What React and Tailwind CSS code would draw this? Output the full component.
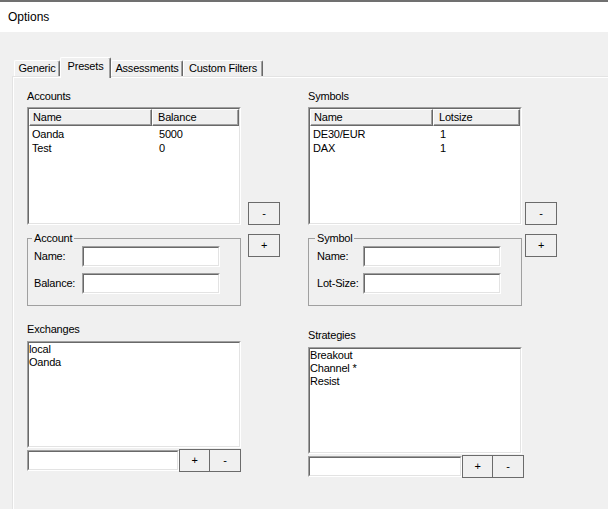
import React from "react";

function Sunken({ className = "", innerClass = "", children }) {
  return (
    <div className={`border border-t-[#a0a0a0] border-l-[#a0a0a0] border-r-white border-b-white ${className}`}>
      <div className={`h-full border border-t-[#696969] border-l-[#696969] border-r-[#e3e3e3] border-b-[#e3e3e3] bg-white ${innerClass}`}>
        {children}
      </div>
    </div>
  );
}

function Btn({ label, className = "" }) {
  return (
    <button
      type="button"
      className={`flex items-center justify-center border border-[#6b6b6b] bg-[#f0f0f0] text-[11px] leading-[13px] text-black ${className}`}
    >
      {label}
    </button>
  );
}

function ListView({ cols, rows }) {
  return (
    <Sunken className="h-[118px] w-[214px]">
      <div className="flex h-[17px]">
        {cols.map((c, i) => (
          <div
            key={c.name}
            className={`flex items-center border-t border-l border-r border-b border-t-white border-l-white border-r-[#696969] border-b-[#696969] bg-[#f0f0f0] shadow-[inset_-1px_-1px_0_#a0a0a0] ${
              i === 0 ? "w-[123px] pl-[3px]" : "w-[87px] pl-[5px]"
            }`}
          >
            {c.name}
          </div>
        ))}
      </div>
      <div className="pt-[1px]">
        {rows.map((r) => (
          <div key={r[0]} className="flex h-[14px] items-center leading-[14px]">
            <div className="w-[123px] pl-[3px]">{r[0]}</div>
            <div className="w-[87px] pl-[7px]">{r[1]}</div>
          </div>
        ))}
      </div>
    </Sunken>
  );
}

function Group({ title, fields, pl, lw }) {
  return (
    <div className={`relative mt-[13px] h-[68px] w-[214px] border border-[#a0a0a0] pt-[7px] ${pl}`}>
      <span className="absolute top-[-7px] bg-[#f0f0f0] px-[2px] leading-[13px]" style={{ left: pl === "pl-[6px]" ? 4 : 6 }}>
        {title}
      </span>
      <div className="flex flex-col gap-[6px]">
        {fields.map((f) => (
          <div key={f} className="flex h-[21px] items-center">
            <span className={lw}>{f}</span>
            <Sunken className="h-[21px] w-[138px]" />
          </div>
        ))}
      </div>
    </div>
  );
}

function ListBox({ items }) {
  return (
    <Sunken className="h-[107px] w-[214px]">
      {items.map((it) => (
        <div key={it} className="h-[13px] leading-[13px]">
          {it}
        </div>
      ))}
    </Sunken>
  );
}

function AddRow({ inputW, mt }) {
  return (
    <div className={`flex h-[23px] ${mt}`}>
      <Sunken className={`mt-[1px] h-[21px] ${inputW}`} />
      <Btn label="+" className="h-[23px] w-[31px]" />
      <Btn label="-" className="-ml-px h-[23px] w-[32px]" />
    </div>
  );
}

function Tab({ label, w, selected }) {
  return (
    <div
      className={`flex items-center justify-center rounded-tl-[2px] rounded-tr-[2px] border-t border-l border-r border-t-white border-l-white border-r-[#696969] bg-[#f0f0f0] shadow-[inset_-1px_0_0_#a0a0a0] ${w} ${
        selected ? "relative z-10 -mb-[2px] h-[21px] pb-[3px]" : "h-[16px]"
      }`}
    >
      {label}
    </div>
  );
}

export default function App() {
  return (
    <div className="h-[509px] w-[608px] overflow-hidden bg-[#f0f0f0] font-['Liberation_Sans',Arial,sans-serif] text-[11px] tracking-[-0.2px] text-black">
      <div className="h-[2px] bg-[#707070]" />
      <div className="flex h-[30px] items-center bg-white pl-[8px] text-[12px] tracking-normal">Options</div>
      <div className="pt-[25px]">
        <div className="flex h-[19px] items-end pl-[14px]">
          <Tab label="Generic" w="w-[46px]" />
          <Tab label="Presets" w="w-[51px]" selected />
          <Tab label="Assessments" w="w-[72px]" />
          <Tab label="Custom Filters" w="w-[80px]" />
        </div>
        <div className="ml-[12px] h-[460px] w-[620px] border-t border-l border-[#e3e3e3] pt-[13px] pl-[14px] shadow-[inset_1px_1px_0_#ffffff]">
          <div className="flex gap-[28px]">
            {/* Left column */}
            <div className="flex w-[253px] flex-col">
              <div className="flex">
                <div className="flex w-[214px] flex-col">
                  <div className="h-[13px] leading-[13px]">Accounts</div>
                  <div className="mt-[4px]">
                    <ListView
                      cols={[{ name: "Name" }, { name: "Balance" }]}
                      rows={[
                        ["Oanda", "5000"],
                        ["Test", "0"],
                      ]}
                    />
                  </div>
                  <Group title="Account" fields={["Name:", "Balance:"]} pl="pl-[6px]" lw="w-[48px]" />
                </div>
                <div className="ml-[7px] flex flex-col gap-[9px] pt-[112px]">
                  <Btn label="-" className="h-[23px] w-[32px]" />
                  <Btn label="+" className="h-[23px] w-[32px]" />
                </div>
              </div>
              <div className="mt-[17px] h-[13px] leading-[13px]">Exchanges</div>
              <div className="mt-[5px]">
                <ListBox items={["local", "Oanda"]} />
              </div>
              <AddRow inputW="w-[152px]" mt="mt-[1px]" />
            </div>
            {/* Right column */}
            <div className="flex w-[249px] flex-col">
              <div className="flex">
                <div className="flex w-[214px] flex-col">
                  <div className="h-[13px] leading-[13px]">Symbols</div>
                  <div className="mt-[4px]">
                    <ListView
                      cols={[{ name: "Name" }, { name: "Lotsize" }]}
                      rows={[
                        ["DE30/EUR", "1"],
                        ["DAX", "1"],
                      ]}
                    />
                  </div>
                  <Group title="Symbol" fields={["Name:", "Lot-Size:"]} pl="pl-[8px]" lw="w-[46px]" />
                </div>
                <div className="ml-[3px] flex flex-col gap-[9px] pt-[112px]">
                  <Btn label="-" className="h-[23px] w-[32px]" />
                  <Btn label="+" className="h-[23px] w-[32px]" />
                </div>
              </div>
              <div className="mt-[23px] h-[13px] leading-[13px]">Strategies</div>
              <div className="mt-[5px]">
                <ListBox items={["Breakout", "Channel *", "Resist"]} />
              </div>
              <AddRow inputW="w-[154px]" mt="mt-[1px]" />
            </div>
          </div>
        </div>
      </div>
    </div>
  );
}
